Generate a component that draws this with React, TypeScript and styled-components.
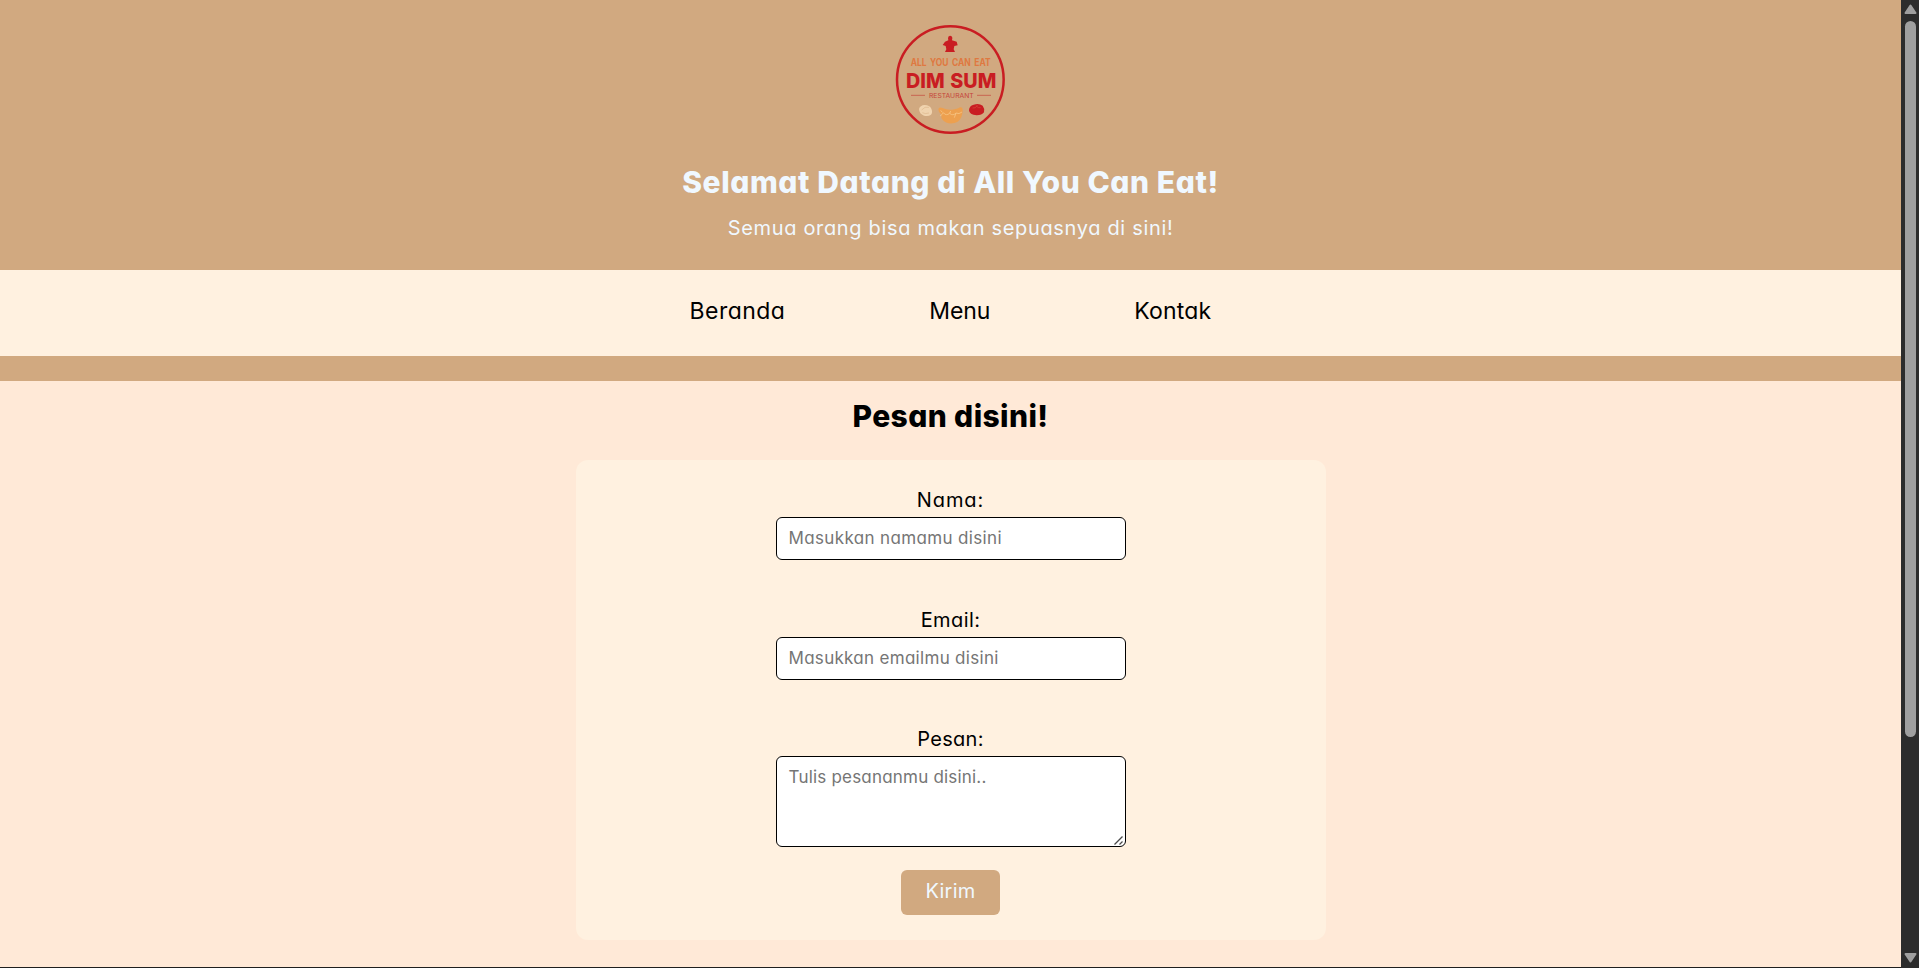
import React from 'react';
import styled, { createGlobalStyle } from 'styled-components';

const color = {
  tan: '#d1a980',
  cream: '#fff1e0',
  peach: '#ffe9d7',
  ice: 'aliceblue',
};

const GlobalStyle = createGlobalStyle`
  * {
    box-sizing: border-box;
  }

  body {
    margin: 0;
    overflow: hidden;
    font-family: Inter, 'Liberation Sans', sans-serif;
    font-feature-settings: 'cv11' 1;
    color: #000;
  }
`;

const Window = styled.div`
  display: flex;
  height: 100vh;
  overflow: hidden;
`;

const Page = styled.div`
  flex: 1;
  display: flex;
  flex-direction: column;
  background: ${color.peach};
  border-bottom: 1px solid #1f1f1f;
`;

const Header = styled.header`
  height: 270px;
  padding-top: 15px;
  display: flex;
  flex-direction: column;
  align-items: center;
  background: ${color.tan};
  color: ${color.ice};
`;

const Logo = styled.svg`
  display: block;
  width: 130px;
  height: 130px;
  margin-right: 1px;
`;

const Heading = styled.h1`
  margin: 15px 0 0;
  font-size: 30px;
  font-weight: 800;
  line-height: 45px;
  letter-spacing: 0.58px;
`;

const Tagline = styled.p`
  margin: 8px 0 0;
  font-size: 20px;
  line-height: 30px;
  letter-spacing: 0.67px;
`;

const Nav = styled.nav`
  height: 86px;
  padding-top: 23px;
  display: flex;
  justify-content: center;
  gap: 144px;
  background: ${color.cream};
`;

const NavLink = styled.a<{ $tracking: number }>`
  font-size: 23px;
  line-height: 36px;
  letter-spacing: ${({ $tracking }) => $tracking}px;
  color: #000;
  text-decoration: none;
`;

const Strip = styled.div`
  height: 25px;
  background: ${color.tan};
`;

const Order = styled.main`
  padding-top: 13px;
  display: flex;
  flex-direction: column;
  align-items: center;
`;

const Title = styled.h2`
  margin: 0 0 21px;
  font-size: 30px;
  font-weight: 800;
  line-height: 45px;
  letter-spacing: 0.4px;
`;

const Form = styled.form`
  width: 750px;
  height: 480px;
  padding-top: 25px;
  display: flex;
  flex-direction: column;
  align-items: center;
  background: ${color.cream};
  border-radius: 12px;
`;

const Label = styled.label<{ $tracking: number }>`
  margin-bottom: 2px;
  font-size: 20px;
  line-height: 30px;
  letter-spacing: ${({ $tracking }) => $tracking}px;
`;

const Input = styled.input<{ $gap: number; $tracking: number; $lift?: number }>`
  width: 350px;
  height: 43px;
  margin: 0 0 ${({ $gap }) => $gap}px;
  padding: 0 12px ${({ $lift = 0 }) => $lift}px;
  border: 1px solid #000;
  border-radius: 6px;
  background: #fff;
  font: inherit;
  font-feature-settings: inherit;
  font-size: 17px;
  letter-spacing: ${({ $tracking }) => $tracking}px;

  &::placeholder {
    color: #757575;
  }
`;

const MessageBox = styled.div`
  position: relative;
  margin-bottom: 23px;
`;

const Message = styled.textarea`
  display: block;
  width: 350px;
  height: 91px;
  margin: 0;
  padding: 8px 12px;
  border: 1px solid #000;
  border-radius: 6px;
  background: #fff;
  font: inherit;
  font-feature-settings: inherit;
  font-size: 17px;
  line-height: 25px;
  letter-spacing: 0.2px;
  resize: none;

  &::placeholder {
    color: #757575;
  }
`;

const Grip = styled.svg`
  position: absolute;
  right: 2px;
  bottom: 1px;
  width: 11px;
  height: 11px;
  fill: none;
  stroke: #4a4a4a;
  stroke-width: 1.3;
`;

const Submit = styled.button`
  width: 99px;
  height: 45px;
  padding: 0 0 3px;
  border: 0;
  border-radius: 6px;
  background: ${color.tan};
  color: ${color.ice};
  font: inherit;
  font-size: 20px;
  letter-spacing: 0.2px;
`;

const Scrollbar = styled.div`
  width: 18px;
  padding: 4px 0 5px;
  display: flex;
  flex-direction: column;
  align-items: center;
  background: #2c2c2c;
`;

const Arrow = styled.svg`
  display: block;
  width: 13px;
  height: 10px;
  fill: #9f9f9f;
  stroke: #9f9f9f;
  stroke-width: 2;
  stroke-linejoin: round;
`;

const Track = styled.div`
  flex: 1;
  padding-top: 7px;
`;

const Thumb = styled.div`
  width: 11px;
  height: 716px;
  border-radius: 6px;
  background: #9f9f9f;
`;

function RestaurantLogo() {
  return (
    <Logo viewBox="0 0 390 390" fontFamily="Inter, sans-serif" role="img" aria-label="Dim Sum">
      <circle cx="196" cy="193.5" r="160" fill="none" stroke="#c91d22" strokeWidth="7.5" />
      <path
        d="M195 62q7 0 7 8l-1 6 14 4 3 11-10 2-2 10 4 8h-30l4-8-2-10-9-3 7-10 10-4-1-6q0-8 6-8z"
        fill="#c91d22"
      />
      <text x="77" y="152" fontSize="29" fontWeight="700" wordSpacing="5" fill="#df7840" textLength="240" lengthAdjust="spacingAndGlyphs">
        ALL YOU CAN EAT
      </text>
      <text x="63" y="219" fontSize="62" fontWeight="800" wordSpacing="4" fill="#c91d22" textLength="271" lengthAdjust="spacingAndGlyphs">
        DIM SUM
      </text>
      <text x="132" y="249" fontSize="20" fill="#c5443a" textLength="134" lengthAdjust="spacingAndGlyphs">
        RESTAURANT
      </text>
      <path d="M78 241h42M276 241h42" stroke="#c5443a" strokeWidth="2" />
      <path d="M102 282q3-11 17-12 15 0 20 11 5 10-1 18-8 6-21 3-14-5-15-20z" fill="#f0d3ae" />
      <path d="M110 285q9-12 22-8M112 293q8 5 20 1" fill="none" stroke="#dcb78d" strokeWidth="2" />
      <path
        d="M161 280q3-5 12-1 13 7 28 5 17-2 24-7 9-1 8 10-1 23-15 33-11 7-27 5-16-4-22-16 2-11-7-18-3-7-1-11z"
        fill="#eda04f"
      />
      <path
        d="M165 303q7-4 10-10 8 11 19 2 10 9 19-1 9 5 18-3M172 292l-5-6M194 295l3-7M213 294l-5 14"
        fill="none"
        stroke="#f6c483"
        strokeWidth="2.5"
      />
      <path d="M252 286q0-13 14-17 16-5 27 3 7 9 4 20-6 9-22 9-22-1-23-15z" fill="#c91d22" />
      <path d="M263 279q8 1 12-5 5 6 12 4M275 274l2-4" fill="none" stroke="#dc5644" strokeWidth="1.6" />
    </Logo>
  );
}

export default function App() {
  return (
    <>
      <GlobalStyle />
      <Window>
        <Page>
          <Header>
            <RestaurantLogo />
            <Heading>Selamat Datang di All You Can Eat!</Heading>
            <Tagline>Semua orang bisa makan sepuasnya di sini!</Tagline>
          </Header>
          <Nav>
            <NavLink $tracking={0.45}>Beranda</NavLink>
            <NavLink $tracking={-0.1}>Menu</NavLink>
            <NavLink $tracking={0.2}>Kontak</NavLink>
          </Nav>
          <Strip />
          <Order>
            <Title>Pesan disini!</Title>
            <Form>
              <Label htmlFor="nama" $tracking={0.9}>Nama:</Label>
              <Input id="nama" placeholder="Masukkan namamu disini" $gap={45} $tracking={0.36} $lift={1} />
              <Label htmlFor="email" $tracking={0.4}>Email:</Label>
              <Input id="email" placeholder="Masukkan emailmu disini" $gap={44} $tracking={0.3} $lift={1} />
              <Label htmlFor="pesan" $tracking={0.3}>Pesan:</Label>
              <MessageBox>
                <Message id="pesan" placeholder="Tulis pesananmu disini.." />
                <Grip viewBox="0 0 11 11">
                  <path d="M1.5 9.5l8-8M6.5 9.5l3-3" />
                </Grip>
              </MessageBox>
              <Submit type="button">Kirim</Submit>
            </Form>
          </Order>
        </Page>
        <Scrollbar>
          <Arrow viewBox="0 0 13 10">
            <path d="M6.5 1.5 1.5 9h10z" />
          </Arrow>
          <Track>
            <Thumb />
          </Track>
          <Arrow viewBox="0 0 13 10">
            <path d="M6.5 8.5 1.5 1h10z" />
          </Arrow>
        </Scrollbar>
      </Window>
    </>
  );
}
